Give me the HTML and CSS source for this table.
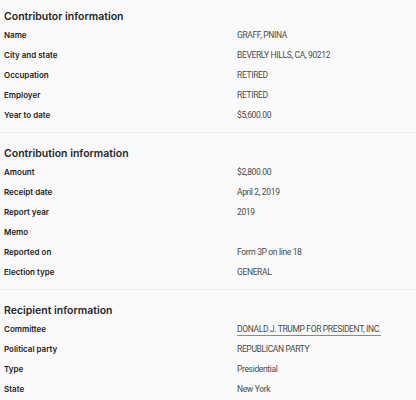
FILE: index.html
```html
<!DOCTYPE html>
<html>
<head>
<meta charset="utf-8">
<link rel="stylesheet" href="styles.css">
</head>
<body>
<section class="sec first">
  <h2 class="title">Contributor information</h2>
  <dl class="rows">
    <dt>Name</dt><dd>GRAFF, PNINA</dd>
    <dt>City and state</dt><dd>BEVERLY HILLS, CA, 90212</dd>
    <dt>Occupation</dt><dd>RETIRED</dd>
    <dt>Employer</dt><dd>RETIRED</dd>
    <dt>Year to date</dt><dd>$5,600.00</dd>
  </dl>
</section>
<section class="sec second">
  <h2 class="title">Contribution information</h2>
  <dl class="rows">
    <dt>Amount</dt><dd>$2,800.00</dd>
    <dt>Receipt date</dt><dd>April 2, 2019</dd>
    <dt>Report year</dt><dd>2019</dd>
    <dt>Memo</dt><dd></dd>
    <dt>Reported on</dt><dd>Form 3P on line 18</dd>
    <dt>Election type</dt><dd>GENERAL</dd>
  </dl>
</section>
<section class="sec">
  <h2 class="title">Recipient information</h2>
  <dl class="rows">
    <dt>Committee</dt><dd><a class="link" href="#">DONALD J. TRUMP FOR PRESIDENT, INC.</a></dd>
    <dt>Political party</dt><dd>REPUBLICAN PARTY</dd>
    <dt>Type</dt><dd>Presidential</dd>
    <dt>State</dt><dd>New York</dd>
  </dl>
</section>
</body>
</html>
```
FILE: styles.css
```css
html, body {
  margin: 0;
  padding: 0;
  background: #fafafa;
}
body {
  font-family: "Open Sans", "Liberation Sans", sans-serif;
  color: #212121;
}
.sec {
  padding: 12px 4px 6px 4px;
  border-bottom: 1px solid #ededed;
}
.sec.first {
  padding-top: 8px;
  padding-bottom: 7px;
}
.sec.second {
  padding-bottom: 7px;
}
.title {
  margin: 0;
  font-family: "Inter", "Open Sans", sans-serif;
  font-size: 10.5px;
  font-weight: 600;
  line-height: 17px;
  color: #262626;
}
.rows {
  margin: 0;
  display: grid;
  grid-template-columns: 233px 1fr;
  grid-auto-rows: 20px;
  align-items: center;
}
.rows dt {
  font-family: "Inter", "Open Sans", sans-serif;
  font-size: 8px;
  font-weight: 600;
  color: #222;
}
.rows dd {
  margin: 0;
  font-family: "Roboto", "Open Sans", sans-serif;
  font-size: 8.5px;
  letter-spacing: -0.35px;
  color: #4a4a4a;
}
.link {
  color: #4a4a4a;
  text-decoration: none;
  border-bottom: 1px solid #8a8a8a;
  padding-bottom: 1px;
}
```
